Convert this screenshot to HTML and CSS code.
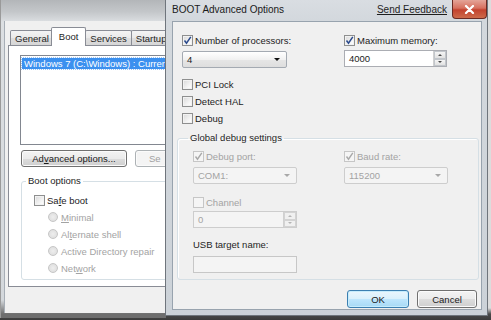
FILE: index.html
```html
<!DOCTYPE html>
<html>
<head>
<meta charset="utf-8">
<link rel="stylesheet" href="styles.css">
</head>
<body>
<div class="desk">
  <div class="win back">
    <div class="back-top"></div>
    <div class="back-client">
      <div class="tabs">
        <span class="tab">General</span>
        <span class="tab sel">Boot</span>
        <span class="tab">Services</span>
        <span class="tab">Startup</span>
      </div>
      <div class="panel">
        <div class="listbox">
          <div class="item">Windows 7 (C:\Windows) : Current</div>
        </div>
        <div class="brow">
          <span class="btn adv">Ad<u>v</u>anced options...</span>
          <span class="btn dis setdef">Se</span>
        </div>
        <fieldset class="grp bootgrp">
          <legend>Boot options</legend>
          <div class="grp-in boot-in">
            <div class="cb"><span class="box"></span><span>Sa<u>f</u>e boot</span></div>
            <div class="rad dis"><span class="circ"></span><span><u>M</u>inimal</span></div>
            <div class="rad dis"><span class="circ"></span><span>Al<u>t</u>ernate shell</span></div>
            <div class="rad dis"><span class="circ"></span><span>Active Directory repair</span></div>
            <div class="rad dis"><span class="circ"></span><span>Net<u>w</u>ork</span></div>
          </div>
        </fieldset>
      </div>
    </div>
  </div>

  <div class="win front">
    <div class="titlebar">
      <span class="ttl">BOOT Advanced Options</span>
      <span class="fb">Send Feedback</span>
      <span class="close"><svg width="11" height="9" viewBox="0 0 11 9"><path d="M2 1 L9 8 M9 1 L2 8" stroke="#fff" stroke-width="2.2" stroke-linecap="round"/></svg></span>
    </div>
    <div class="fclient">
      <div class="toprow">
        <div class="col">
          <div class="cb"><span class="box"><svg viewBox="0 0 11 11" width="11" height="11"><path d="M2.5 5.5 L4.5 8.2 L8.8 1.8" fill="none" stroke="#2b4a8c" stroke-width="1.5"/></svg></span><span>Number of processors:</span></div>
          <div class="combo w105"><span>4</span><i class="arr"></i></div>
        </div>
        <div class="col">
          <div class="cb"><span class="box"><svg viewBox="0 0 11 11" width="11" height="11"><path d="M2.5 5.5 L4.5 8.2 L8.8 1.8" fill="none" stroke="#2b4a8c" stroke-width="1.5"/></svg></span><span>Maximum memory:</span></div>
          <div class="spin w103"><span class="val">4000</span><span class="sbtns"><span class="sb"><i class="up"></i></span><span class="sb"><i class="dn"></i></span></span></div>
        </div>
      </div>
      <div class="cblist">
        <div class="cb"><span class="box"></span><span>PCI Lock</span></div>
        <div class="cb"><span class="box"></span><span>Detect HAL</span></div>
        <div class="cb"><span class="box"></span><span>Debug</span></div>
      </div>
      <fieldset class="grp dbg">
        <legend>Global debug settings</legend>
        <div class="grp-in dbg-in">
          <div class="dgrid">
            <div class="col">
              <div class="cb dis"><span class="box"><svg viewBox="0 0 11 11" width="11" height="11"><path d="M2.5 5.5 L4.5 8.2 L8.8 1.8" fill="none" stroke="#a9a9a9" stroke-width="1.4"/></svg></span><span>Debug port:</span></div>
              <div class="combo dis w104"><span>COM1:</span><i class="arr"></i></div>
            </div>
            <div class="col">
              <div class="cb dis"><span class="box"><svg viewBox="0 0 11 11" width="11" height="11"><path d="M2.5 5.5 L4.5 8.2 L8.8 1.8" fill="none" stroke="#a9a9a9" stroke-width="1.4"/></svg></span><span>Baud rate:</span></div>
              <div class="combo dis w104"><span>115200</span><i class="arr"></i></div>
            </div>
          </div>
          <div class="cb dis chan"><span class="box"></span><span>Channel</span></div>
          <div class="spin dis w104"><span class="val">0</span><span class="sbtns"><span class="sb"><i class="up"></i></span><span class="sb"><i class="dn"></i></span></span></div>
          <div class="lbl">USB target name:</div>
          <div class="tbox dis w104"></div>
        </div>
      </fieldset>
      <div class="btns">
        <span class="btn def">OK</span>
        <span class="btn">Cancel</span>
      </div>
    </div>
  </div>
</div>
</body>
</html>
```

FILE: styles.css
```css
html, body {
  margin: 0;
  padding: 0;
}
body {
  width: 491px;
  height: 320px;
  overflow: hidden;
  background: linear-gradient(to bottom, #dcdcdc 0, #dcdcdc 308px, #4a4a4a 314px, #3c3c3c 320px);
  font-family: "Liberation Sans", Arial, sans-serif;
  font-size: 9.5px;
  color: #1c1c1c;
}
.desk {
  position: relative;
  width: 491px;
  height: 320px;
}
.win {
  position: absolute;
  top: 0;
  box-sizing: border-box;
}

/* ---------- back window ---------- */
.back {
  left: 0;
  width: 166px;
  height: 318px;
  z-index: 1;
  overflow: hidden;
  background: linear-gradient(to bottom, #b3b6b9 0, #c4c7ca 12px, #dcdfe2 22px, #d4d8dc 300px, #6e6e6e 314px);
  padding: 0 0 5px 3px;
  display: flex;
  flex-direction: column;
  border-left: 1px solid #9a9a9a;
}
.back-top {
  height: 21px;
  flex: none;
}
.back-client {
  flex: 1;
  background: #f0f0f0;
  border-left: 1px solid #a7aeb6;
  padding: 6px 0 0 3px;
  min-width: 240px;
}
.tabs {
  display: flex;
  align-items: flex-end;
  height: 18px;
  padding-left: 2px;
  position: relative;
  z-index: 2;
}
.tab {
  height: 15px;
  box-sizing: border-box;
  border: 1px solid #898c95;
  border-bottom: none;
  border-radius: 2px 2px 0 0;
  background: linear-gradient(to bottom, #f4f4f4, #e9e9e9 50%, #dedede 51%, #d6d6d6);
  padding: 1px 4px 0;
  margin-right: -1px;
  line-height: 13px;
  color: #1e1e1e;
}
.tab.sel {
  height: 19px;
  background: #ffffff;
  margin: 0 -2px -1px -2px;
  padding: 2px 7px 0;
  position: relative;
  z-index: 3;
}
.tab.sel + .tab { margin-left: 1px; }
.panel {
  height: 242px;
  box-sizing: border-box;
  border: 1px solid #898c95;
  background: #ffffff;
  padding: 9px 0 0 11px;
  position: relative;
  z-index: 1;
}
.listbox {
  height: 90px;
  box-sizing: border-box;
  border: 1px solid #828790;
  padding: 2px 1px;
}
.item {
  background: #3b90ef;
  color: #ffffff;
  height: 11px;
  line-height: 11px;
  padding-left: 2px;
  white-space: nowrap;
  outline: 1px dotted #9cc6f5;
}
.brow {
  display: flex;
  gap: 8px;
  margin-top: 5px;
  padding-left: 1px;
}
.btn {
  height: 17px;
  box-sizing: border-box;
  border: 1px solid #707070;
  border-radius: 3px;
  background: linear-gradient(to bottom, #f3f3f3, #ebebeb 50%, #dddddd 51%, #cfcfcf);
  box-shadow: inset 0 0 0 1px #fbfbfb;
  display: flex;
  align-items: center;
  justify-content: center;
  color: #1a1a1a;
  white-space: nowrap;
  flex: none;
}
.adv { width: 106px; }
.btn.dis {
  border-color: #adb2b5;
  background: #f4f4f4;
  color: #a0a0a0;
  justify-content: flex-start;
  padding-left: 13px;
}
.setdef { width: 90px; }

fieldset.grp {
  margin: 0;
  padding: 0;
  border: 1px solid #d5dfe5;
  border-radius: 3px;
  box-shadow: inset 1px 1px 0 #ffffff;
  min-width: 0;
}
fieldset.grp legend {
  padding: 0 2px;
  line-height: 12px;
  color: #1e1e1e;
}
.bootgrp {
  margin: 8px 0 0 1px !important;
}
.bootgrp legend { margin-left: 4px; }
.boot-in {
  padding: 7px 0 5px 12px;
  display: flex;
  flex-direction: column;
  gap: 5px;
}
.cb {
  display: flex;
  align-items: center;
  height: 12px;
  gap: 2px;
  white-space: nowrap;
}
.box {
  width: 11px;
  height: 11px;
  box-sizing: border-box;
  border: 1px solid #8e8f8f;
  background: linear-gradient(135deg, #d8d8d8, #f7f7f7 70%, #ffffff);
  box-shadow: inset 0 0 0 1px #f2f2f2;
  display: inline-flex;
  flex: none;
  position: relative;
}
.box svg {
  position: absolute;
  left: -1px;
  top: -1px;
}
.cb.dis { color: #a3a3a3; }
.cb.dis .box {
  border-color: #c6c6c6;
  background: #f5f5f5;
  box-shadow: none;
}
.rad {
  display: flex;
  align-items: center;
  height: 12px;
  gap: 3px;
  padding-left: 14px;
  white-space: nowrap;
}
.rad.dis { color: #a3a3a3; }
.circ {
  width: 10px;
  height: 10px;
  box-sizing: border-box;
  border-radius: 50%;
  border: 1px solid #c6c6c6;
  background: radial-gradient(circle at 50% 50%, #eeeeee, #dadada);
  flex: none;
}

/* ---------- front window ---------- */
.front {
  left: 165px;
  width: 323px;
  height: 316px;
  z-index: 5;
  border: 1px solid #6f757c;
  border-top: none;
  background: linear-gradient(to bottom, #d9dde2 0, #d3d8dd 20px, #ccd2d8 100%);
  padding: 0 5px 5px 6px;
  display: flex;
  flex-direction: column;
}
.titlebar {
  height: 21px;
  flex: none;
  display: flex;
  align-items: flex-start;
}
.ttl {
  margin-top: 4px;
  font-size: 10px;
  color: #1a1a1a;
  flex: 1;
}
.fb {
  margin-top: 4px;
  font-size: 10px;
  text-decoration: underline;
  color: #1e1e1e;
  margin-right: 5px;
}
.close {
  width: 35px;
  height: 19px;
  box-sizing: border-box;
  border: 1px solid #6b2a23;
  border-top: none;
  border-radius: 0 0 4px 4px;
  background: linear-gradient(to bottom, #e4a498 0, #d7705f 45%, #c3422e 55%, #cd6a4a 100%);
  display: flex;
  align-items: center;
  justify-content: center;
  margin-right: -5px;
}
.fclient {
  flex: 1;
  background: #f0f0f0;
  border: 1px solid #98a3ae;
  padding: 12px 0 0 9px;
  display: flex;
  flex-direction: column;
  align-items: flex-start;
}
.toprow {
  display: grid;
  grid-template-columns: 162px 110px;
}
.col {
  display: flex;
  flex-direction: column;
  gap: 5px;
}
.combo {
  height: 17px;
  box-sizing: border-box;
  border: 1px solid #a4aab2;
  border-radius: 2px;
  background: linear-gradient(to bottom, #ffffff, #f1f1f1 50%, #e6e6e6 51%, #dedede);
  display: flex;
  align-items: center;
  padding: 0 6px 0 4px;
}
.combo .arr {
  margin-left: auto;
  width: 0;
  height: 0;
  border-left: 3px solid transparent;
  border-right: 3px solid transparent;
  border-top: 3px solid #111;
}
.combo.dis {
  border-color: #cdcdcd;
  background: #f4f4f4;
  color: #a3a3a3;
}
.combo.dis .arr { border-top-color: #a8a8a8; }
.w105 { width: 105px; }
.w104 { width: 104px; }
.w103 { width: 103px; }
.spin {
  height: 17px;
  box-sizing: border-box;
  border: 1px solid #abadb3;
  background: #ffffff;
  display: flex;
  align-items: stretch;
  margin-top: -1px;
}
.spin .val {
  flex: 1;
  display: flex;
  align-items: center;
  padding-left: 4px;
}
.sbtns {
  width: 12px;
  display: flex;
  flex-direction: column;
  border-left: 1px solid #d0d0d0;
}
.sb {
  flex: 1;
  background: linear-gradient(to bottom, #f4f4f4, #e2e2e2);
  border: 1px solid #c2c6cb;
  display: flex;
  align-items: center;
  justify-content: center;
}
.sb i {
  width: 0;
  height: 0;
  border-left: 2px solid transparent;
  border-right: 2px solid transparent;
}
.sb i.up { border-bottom: 2px solid #4a4a4a; }
.sb i.dn { border-top: 2px solid #4a4a4a; }
.spin.dis {
  border-color: #cdcdcd;
  background: #f4f4f4;
  color: #a3a3a3;
  margin-top: 0;
}
.spin.dis .sb { background: #f0f0f0; border-color: #d3d3d3; }
.spin.dis .sb i.up { border-bottom-color: #b4b4b4; }
.spin.dis .sb i.dn { border-top-color: #b4b4b4; }
.cblist {
  margin-top: 10px;
  display: flex;
  flex-direction: column;
  gap: 5px;
}
.dbg {
  align-self: stretch;
  margin: 8px 2px 0 -5px !important;
}
.dbg legend { margin-left: 10px; }
.dbg-in {
  padding: 6px 0 6px 15px;
  display: flex;
  flex-direction: column;
  align-items: flex-start;
}
.dgrid {
  display: grid;
  grid-template-columns: 151px 104px;
}
.chan { margin-top: 12px; margin-bottom: 3px; }
.lbl {
  margin-top: 11px;
  height: 12px;
  line-height: 12px;
  color: #1e1e1e;
}
.tbox {
  margin-top: 5px;
  height: 17px;
  box-sizing: border-box;
  border: 1px solid #c7c7c7;
  background: #f4f4f4;
}
.btns {
  align-self: flex-end;
  display: flex;
  gap: 8px;
  margin-top: 10px;
  margin-right: 4px;
}
.btns .btn { width: 60px; height: 18px; }
.btn.def {
  width: 62px !important;
  border-color: #3c7fb1;
  background: linear-gradient(to bottom, #eaf6fd, #d9f0fc 50%, #bee6fd 51%, #a7d9f5);
  box-shadow: inset 0 0 0 1px #c6ecfc;
}
```
